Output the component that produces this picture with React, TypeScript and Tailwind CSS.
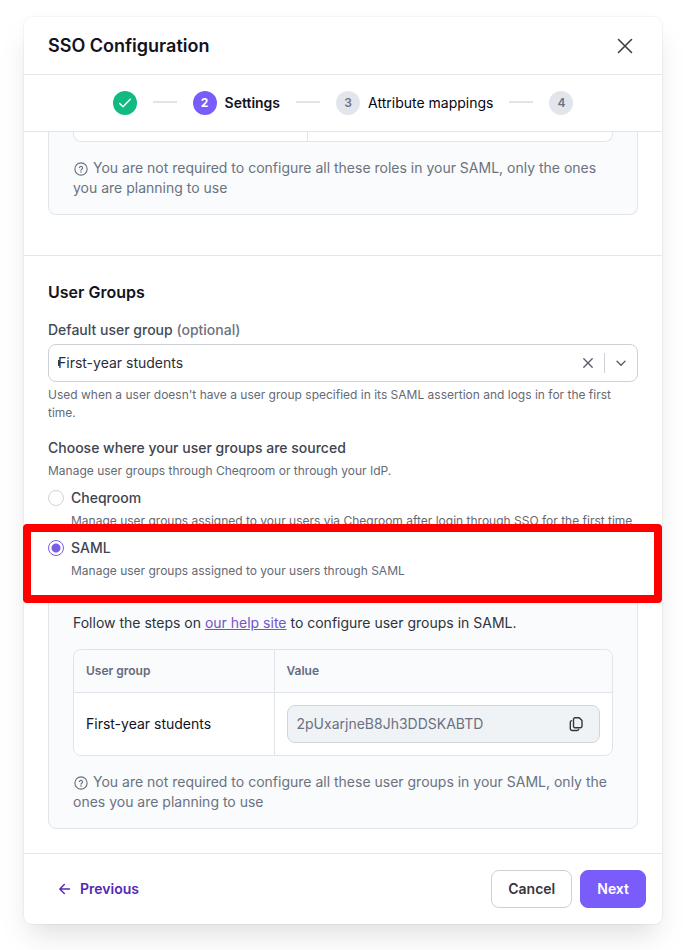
import { useState, type ReactNode } from "react";

function HelpNote({ children }: { children: ReactNode }) {
  return (
    <p className="mt-4 text-sm leading-5 text-[#6b7280]">
      <svg viewBox="0 0 24 24" aria-hidden="true" className="mr-1 inline-block size-4 align-[-4px]" fill="none" stroke="currentColor" strokeWidth="1.7" strokeLinecap="round" strokeLinejoin="round">
        <circle cx="12" cy="12" r="9.2" />
        <path d="M9.6 9.9a2.5 2.5 0 0 1 4.9.6c0 1.6-2.5 1.9-2.5 3.2" />
        <path d="M12 16.4v.1" strokeWidth="2.2" />
      </svg>
      {children}
    </p>
  );
}

function StepLine() {
  return <li aria-hidden="true" className="mb-0.5 h-0.5 w-6 bg-[#e3e4e8]" />;
}

function Step({ number, label, active = false }: { number: number; label?: string; active?: boolean }) {
  return (
    <li className="flex items-center gap-2" aria-current={active ? "step" : undefined}>
      <span
        className={
          active
            ? "flex size-6 items-center justify-center rounded-full bg-[#7a5cfa] text-xs font-bold text-white"
            : "flex size-6 items-center justify-center rounded-full bg-[#e2e5ec] text-xs font-semibold text-[#6b7283]"
        }
      >
        {number}
      </span>
      {label && (
        <span className={active ? "text-sm font-semibold text-[#111322]" : "text-sm font-normal text-[#050610]"}>
          {label}
        </span>
      )}
    </li>
  );
}

function SourceOption({
  id,
  label,
  description,
  checked,
  onSelect,
}: {
  id: string;
  label: string;
  description: string;
  checked: boolean;
  onSelect: () => void;
}) {
  return (
    <div className="mt-2">
      <div className="flex items-center gap-[7px]">
        <input
          type="radio"
          id={id}
          name="source"
          checked={checked}
          onChange={onSelect}
          aria-describedby={id + "-description"}
          className="size-4 shrink-0 appearance-none rounded-full border border-[#cfd3da] bg-white checked:border-[#7a5cdf] checked:bg-[radial-gradient(circle,#7a5ce6_4px,transparent_5px)]"
        />
        <label htmlFor={id} className="text-sm leading-5 font-medium text-[#40444f]">
          {label}
        </label>
      </div>
      <p id={id + "-description"} className="mt-1 pl-[23px] text-xs leading-[18px] text-[#656a75]">
        {description}
      </p>
    </div>
  );
}

export default function App() {
  const [source, setSource] = useState("saml");
  const [group, setGroup] = useState("first");

  return (
    <div className="min-h-[950px] overflow-hidden bg-white px-6 pt-[17px] pb-[26px] font-['Inter',sans-serif] text-[#111322]">
      <main className="rounded-lg bg-white shadow-[0_0_1px_1px_rgba(0,0,0,0.04),0_16px_24px_-8px_rgba(0,0,0,0.08),0_16px_32px_0_rgba(0,0,0,0.05)]">
        <header className="flex h-[58px] items-center justify-between border-b border-[#e3e6ea] px-6">
          <h1 className="text-lg font-semibold">SSO Configuration</h1>
          <button type="button" aria-label="Close" className="flex size-6 items-center justify-center text-[#3d4048]">
            <svg viewBox="0 0 24 24" className="size-6" fill="none" stroke="currentColor" strokeWidth="1.6" strokeLinecap="round">
              <path d="m4.500 5.500 13 13m0-13-13 13" />
            </svg>
          </button>
        </header>

        <ol aria-label="Progress" className="flex h-[57px] items-center justify-center gap-4 border-b border-[#e3e6ea]">
          <li className="flex size-6 items-center justify-center rounded-full bg-[#12b981] text-white">
            <svg viewBox="0 0 24 24" role="img" aria-label="Step 1 completed" className="size-6" fill="none" stroke="currentColor" strokeWidth="1.4" strokeLinecap="round" strokeLinejoin="round">
              <path d="m6.700 12.500 3.300 3.300 7.300-7.600" />
            </svg>
          </li>
          <StepLine />
          <Step number={2} label="Settings" active />
          <StepLine />
          <Step number={3} label="Attribute mappings" />
          <StepLine />
          <Step number={4} />
        </ol>

        <section aria-label="Roles" className="border-b border-[#e3e6ea] px-6 pb-10">
          <div className="rounded-b-lg border border-t-0 border-[#e1e5ea] bg-[#f9fbfc] px-6 pb-4">
            <div className="grid h-2.5 grid-cols-[234px_1fr] overflow-hidden rounded-b-lg border border-t-0 border-[#e1e5ea] bg-white">
              <div className="border-r border-[#e1e5ea]" />
            </div>
            <HelpNote>
              You are not required to configure all these roles in your SAML, only the ones you are planning to use
            </HelpNote>
          </div>
        </section>

        <section aria-labelledby="groups-title" className="p-6">
          <h2 id="groups-title" className="text-base leading-6 font-semibold">
            User Groups
          </h2>

          <label htmlFor="default-group" className="mt-4 block text-sm leading-5 font-medium text-[#444a55]">
            Default user group <span className="text-[#6b7280]">(optional)</span>
          </label>
          <div className="relative mt-1 flex h-[38px] items-center rounded-lg border border-[#ccd1d7] bg-white">
            <select
              id="default-group"
              value={group}
              onChange={(e) => setGroup(e.target.value)}
              className="h-full min-w-0 flex-1 appearance-none bg-transparent px-[9px] text-sm text-[#2b2e36] outline-none"
            >
              <option value="first">First-year students</option>
              <option value=""></option>
            </select>
            <span aria-hidden="true" className="pointer-events-none absolute left-[9px] h-1.5 w-0.5 bg-[#3a3d45]" />
            <button type="button" aria-label="Clear" onClick={() => setGroup("")} className="flex size-8 items-center justify-center text-[#5b606b]">
              <svg viewBox="0 0 16 16" className="size-4" fill="none" stroke="currentColor" strokeWidth="1.4" strokeLinecap="round">
                <path d="m3.800 3.800 8.400 8.400m0-8.400-8.400 8.400" />
              </svg>
            </button>
            <span className="h-5 w-px bg-[#ccd1d7]" />
            <svg viewBox="0 0 16 16" aria-hidden="true" className="pointer-events-none mx-2 size-4" fill="none" stroke="#5b606b" strokeWidth="1.4" strokeLinecap="round" strokeLinejoin="round">
              <path d="m4 6.200 4 4 4-4" />
            </svg>
          </div>
          <p className="mt-1 text-xs leading-[18px] text-[#656a75]">
            Used when a user doesn't have a user group specified in its SAML assertion and logs in for the first time.
          </p>

          <fieldset className="mt-4">
            <legend className="text-sm leading-5 font-medium text-[#40444f]">
              Choose where your user groups are sourced
            </legend>
            <p className="mt-1 text-xs leading-[18px] text-[#656a75]">
              Manage user groups through Cheqroom or through your IdP.
            </p>
            <SourceOption
              id="cheqroom"
              label="Cheqroom"
              description="Manage user groups assigned to your users via Cheqroom after login through SSO for the first time"
              checked={source === "cheqroom"}
              onSelect={() => setSource("cheqroom")}
            />
            <div className="relative">
              <SourceOption
                id="saml"
                label="SAML"
                description="Manage user groups assigned to your users through SAML"
                checked={source === "saml"}
                onSelect={() => setSource("saml")}
              />
              <div aria-hidden="true" className="pointer-events-none absolute -top-3.5 -right-6 -bottom-[23px] -left-[25px] rounded border-8 border-[#ff0000]" />
            </div>
          </fieldset>

          <div className="mt-4 rounded-lg border border-[#e1e5ea] bg-[#f9fbfc] px-6 py-4">
            <p className="text-sm leading-5 text-[#2f323b]">
              Follow the steps on{" "}
              <a href="#help" className="text-[#7353c9] underline">
                our help site
              </a>{" "}
              to configure user groups in SAML.
            </p>
            <div className="mt-4 overflow-hidden rounded-lg border border-[#e1e5ea] bg-white">
              <table className="w-full table-fixed border-collapse text-left">
                <thead className="bg-[#f9fbfc]">
                  <tr className="h-[42px] border-b border-[#e1e5ea] text-xs text-[#656b7c]">
                    <th scope="col" className="w-[200px] border-r border-[#e1e5ea] px-3 font-semibold">
                      User group
                    </th>
                    <th scope="col" className="px-3 font-semibold">
                      Value
                    </th>
                  </tr>
                </thead>
                <tbody>
                  <tr className="text-sm">
                    <td className="border-r border-[#e1e5ea] px-3">First-year students</td>
                    <td className="p-3">
                      <div className="flex h-[38px] items-center rounded-lg border border-[#d0d5dc] bg-[#f0f3f6] pr-3.5 pl-[9px]">
                        <input
                          type="text"
                          readOnly
                          aria-label="Value for First-year students"
                          value="2pUxarjneB8Jh3DDSKABTD"
                          className="min-w-0 flex-1 bg-transparent text-sm text-[#6b7083] outline-none"
                        />
                        <button type="button" aria-label="Copy value" className="text-[#33363f]">
                          <svg viewBox="0 0 18 18" className="block size-[18px]" fill="none" stroke="currentColor" strokeWidth="1.400" strokeLinecap="round" strokeLinejoin="round">
                            <path d="M8 2.700h4.200l2.800 2.800v5.800a1.500 1.500 0 0 1-1.500 1.500H8a1.500 1.500 0 0 1-1.500-1.500V4.200A1.500 1.500 0 0 1 8 2.700Z" />
                            <path d="M4.600 5.600A1.500 1.500 0 0 0 3.300 7v6.800A1.700 1.700 0 0 0 5 15.500h5.200a1.500 1.500 0 0 0 1.400-1" />
                          </svg>
                        </button>
                      </div>
                    </td>
                  </tr>
                </tbody>
              </table>
            </div>
            <HelpNote>
              You are not required to configure all these user groups in your SAML, only the ones you are planning to use
            </HelpNote>
          </div>
        </section>

        <footer className="flex items-center gap-2 border-t border-[#e3e6ea] px-4 py-4">
          <button type="button" className="mr-auto flex h-[38px] items-center gap-2 px-4 text-sm font-semibold text-[#5527b5]">
            <svg viewBox="0 0 16 16" aria-hidden="true" className="size-4" fill="none" stroke="currentColor" strokeWidth="1.400" strokeLinecap="round" strokeLinejoin="round">
              <path d="M13.500 8H4m4.300-4.500L3.800 8l4.500 4.500" />
            </svg>
            Previous
          </button>
          <button type="button" className="h-[38px] rounded-lg border border-[#ccd1d7] bg-white px-4 text-sm font-semibold text-[#33363f]">
            Cancel
          </button>
          <button type="button" className="h-[38px] rounded-lg border border-[#7a5cfa] bg-[#7a5cfa] px-4 text-sm font-semibold text-white">
            Next
          </button>
        </footer>
      </main>
    </div>
  );
}
